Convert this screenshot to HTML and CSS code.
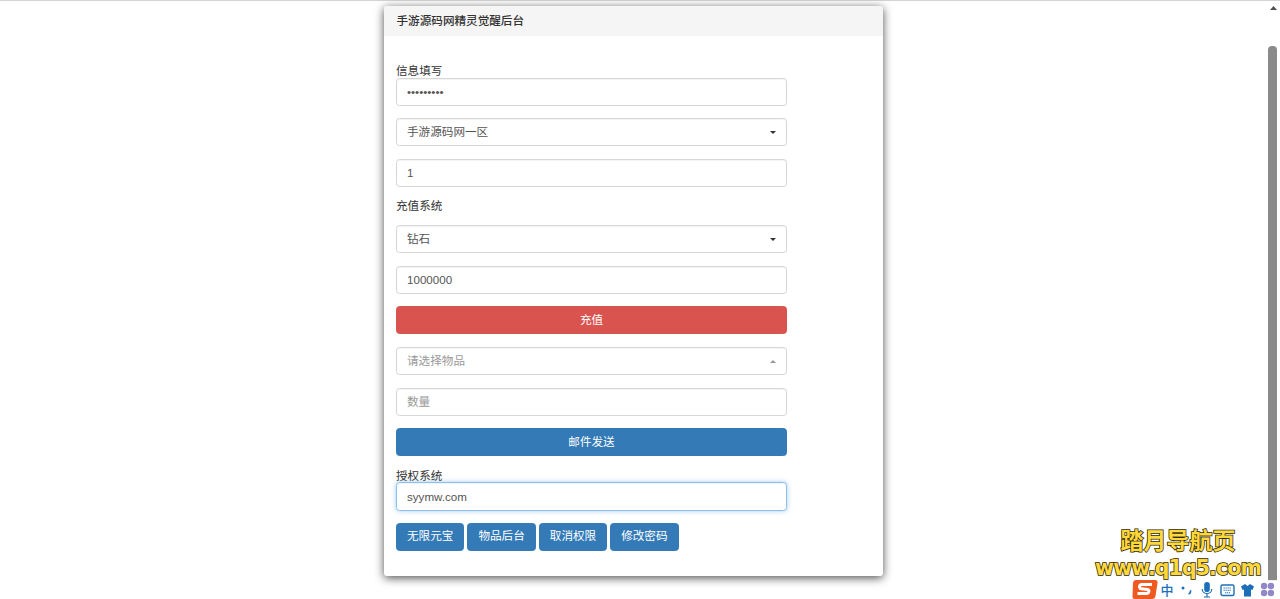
FILE: index.html
```html
<!DOCTYPE html>
<html lang="zh">
<head>
<meta charset="utf-8">
<title>手游源码网精灵觉醒后台</title>
<link rel="stylesheet" href="styles.css">
</head>
<body>
<div class="app">
  <main class="page">
    <section class="panel">
      <h1 class="panel-heading">手游源码网精灵觉醒后台</h1>
      <form class="panel-body">
        <label class="label">信息填写</label>
        <input class="control" type="password" value="*********">
        <div class="control select"><span>手游源码网一区</span><i class="caret"></i></div>
        <input class="control" type="text" value="1">
        <label class="label label-open">充值系统</label>
        <div class="control select"><span>钻石</span><i class="caret"></i></div>
        <input class="control" type="text" value="1000000">
        <button class="btn btn-danger btn-block" type="button">充值</button>
        <div class="control select placeholder"><span>请选择物品</span><i class="caret caret-up"></i></div>
        <input class="control" type="text" placeholder="数量">
        <button class="btn btn-primary btn-block" type="button">邮件发送</button>
        <label class="label label-last">授权系统</label>
        <input class="control focus" type="text" value="syymw.com">
        <div class="actions">
          <button class="btn btn-primary" type="button">无限元宝</button>
          <button class="btn btn-primary" type="button">物品后台</button>
          <button class="btn btn-primary" type="button">取消权限</button>
          <button class="btn btn-primary" type="button">修改密码</button>
        </div>
      </form>
    </section>
  </main>
  <div class="scrollbar">
    <svg class="arrow" width="13" height="13" viewBox="0 0 13 13"><path d="M6.500 5L10 9H3z" fill="#505050"/></svg>
    <div class="thumb"></div>
  </div>
</div>
<div class="watermark">
  <div class="wm-title">踏月导航页</div>
  <div class="wm-url">www.q1q5.com</div>
</div>
<div class="ime">
  <svg class="ime-logo" width="26" height="19" viewBox="0 0 26 19"><path d="M4 0H23Q26 0 25.500 3L23.500 16Q23 19 20 19H3Q0 19 .5 16L1 3Q1.500 0 4 0z" fill="#ef5a22"/><path d="M20 4.500H10C7 4.500 6.500 8.500 9.500 8.800L15.500 9.500C18 9.800 17 13.500 14.500 13.500H5.500" fill="none" stroke="#fff" stroke-width="3"/></svg>
  <span class="ime-item ime-zh">中</span>
  <span class="ime-item"><svg width="14" height="14" viewBox="0 0 14 14"><circle cx="3" cy="5" r="1.500" fill="#1c6fb8"/><path d="M10 7.500C11 8 10.500 10.500 8.500 11" fill="none" stroke="#1c6fb8" stroke-width="1.800"/></svg></span>
  <span class="ime-item"><svg width="14" height="17" viewBox="0 0 14 17"><rect x="4.200" y="1" width="5.600" height="10" rx="2.800" fill="#1c6fb8"/><path d="M2.200 8C2.200 14 11.800 14 11.800 8M7 13V16M4 16H10" fill="none" stroke="#1c6fb8" stroke-width="1.200"/></svg></span>
  <span class="ime-item"><svg width="15" height="14" viewBox="0 0 15 14"><rect x="1" y="2" width="13" height="10.500" rx="1.500" fill="none" stroke="#1c6fb8" stroke-width="1.400"/><path d="M3.500 5H11.500M3.500 7.200H11.500M5 9.800H10" stroke="#1c6fb8" stroke-width="1.100" stroke-dasharray="1.300 .7"/></svg></span>
  <span class="ime-item"><svg width="15" height="14" viewBox="0 0 14 14"><path d="M4.500 1L0.500 3.500L2 7L3.500 6.500V13.500H10.500V6.500L12 7L13.500 3.500L9.500 1L7 3z" fill="#1c6fb8"/></svg></span>
  <span class="ime-item"><svg width="15" height="15" viewBox="0 0 14 14"><g fill="#9088c8"><circle cx="3.800" cy="3.800" r="3"/><circle cx="10.200" cy="3.800" r="3"/><circle cx="3.800" cy="10.200" r="3"/><circle cx="10.200" cy="10.200" r="3"/></g></svg></span>
</div>
</body>
</html>
```
FILE: styles.css
```css
* { box-sizing: border-box; }
html, body { margin: 0; height: 100%; overflow: hidden; background: #fff; }
body {
  font-family: "Liberation Sans", "Noto Sans CJK SC", sans-serif;
  font-size: 11.6px;
  line-height: 1.43;
  color: #333;
  position: relative;
}
.app { display: flex; height: 100%; border-top: 1px solid #d4d4d4; }
.page { flex: 1; min-width: 0; display: flex; justify-content: center; align-items: flex-start; padding-top: 5px; }
.panel {
  width: 499px;
  height: 570px;
  background: #fff;
  border-radius: 3px;
  box-shadow: 0 2px 10px rgba(0, 0, 0, .7);
}
.panel-heading {
  margin: 0;
  height: 30px;
  padding: 1px 12.500px 0;
  display: flex;
  align-items: center;
  font-size: 11.6px;
  font-weight: 500;
  color: #333;
  background: #f5f5f5;
  border-radius: 3px 3px 0 0;
}
.panel-body { width: 415px; padding: 26.600px 12px 0; display: flex; flex-direction: column; }
.label { display: block; height: 15px; line-height: 15px; }
.label-open { height: 17px; line-height: 17px; margin: -2.800px 0 11.700px; }
.label-last { height: 13.400px; margin-top: -.7px; }
.control {
  display: block;
  width: 100%;
  height: 28px;
  margin-bottom: 12.600px;
  padding: 0 10px;
  font: inherit;
  color: #555;
  background: #fff;
  border: 1px solid #d6d6d6;
  border-radius: 3.500px;
  box-shadow: inset 0 1px 1px rgba(0, 0, 0, .05);
  outline: none;
}
.control::placeholder { color: #999; opacity: 1; }
.select { display: flex; align-items: center; justify-content: space-between; padding-right: 10.500px; }
.placeholder { color: #999; }
.caret { width: 0; height: 0; border: 3.500px solid transparent; border-top-color: #333; border-bottom-width: 0; }
.caret-up { border-top-width: 0; border-top-color: transparent; border-bottom: 3.500px solid #999; }
.focus {
  height: 29px;
  border-color: #8cc0ea;
  box-shadow: inset 0 1px 1px rgba(0, 0, 0, .05), 0 0 5px rgba(102, 175, 233, .6);
  margin-bottom: 12px;
}
.btn {
  height: 28px;
  padding: 0 10px;
  font: inherit;
  color: #fff;
  border: 1px solid transparent;
  border-radius: 3.500px;
}
.btn-block { display: block; width: 100%; margin-bottom: 12.600px; }
.btn-danger { background: #d9534f; border-color: #d9534f; }
.btn-primary { background: #337ab7; border-color: #337ab7; }
.actions { display: flex; gap: 3px; }
.scrollbar { width: 13px; flex: none; background: #fff; display: flex; flex-direction: column; }
.arrow { flex: none; }
.thumb { margin: 32px 3px 0 1px; height: 535px; background: #8a8a8a; border-radius: 4px 4px 0 0; }
.watermark {
  position: absolute;
  right: 19px;
  top: 522px;
  width: 166px;
  text-align: center;
  font-weight: 700;
  color: #ffd83d;
  -webkit-text-stroke: 1.500px #2e2600;
  paint-order: stroke fill;
}
.wm-title { font-size: 23px; line-height: 34px; font-family: "Noto Sans CJK SC", sans-serif; }
.wm-url { font-size: 20.500px; line-height: 24px; font-family: "DejaVu Sans", sans-serif; white-space: nowrap; letter-spacing: -.9px; }
.ime {
  position: absolute;
  right: 0;
  bottom: 0;
  width: 148px;
  height: 19px;
  display: flex;
  align-items: center;
  background: rgba(255, 255, 255, .85);
}
.ime-logo { flex: none; margin-right: -1px; }
.ime-item { flex: none; width: 20px; display: flex; align-items: center; justify-content: center; }
.ime-zh { font-size: 13px; font-weight: 500; color: #1c6fb8; font-family: "Noto Sans CJK SC", sans-serif; line-height: 19px; }
```
